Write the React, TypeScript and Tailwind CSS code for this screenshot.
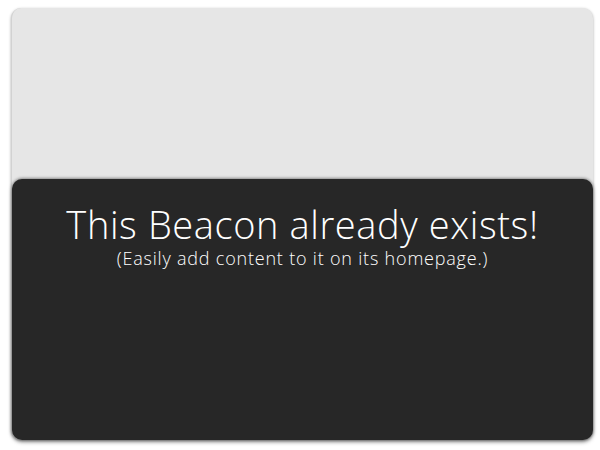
export default function App() {
  return (
    <div className="w-[600px] h-[450px] bg-white pt-[8px] pl-[11px]">
      <div className="w-[582px] h-[432px] flex flex-col rounded-[10px] bg-[#e6e6e6] shadow-[0_1px_3px_rgba(0,0,0,0.35)] border-l border-[#d2d2d2]">
        <div className="h-[171px] shrink-0" />
        <div className="flex-1 rounded-[10px] bg-[#272727] shadow-[0_-1px_3px_rgba(0,0,0,0.35),0_2px_4px_rgba(0,0,0,0.4)] flex flex-col items-center pt-[23px] text-white font-['Open_Sans',sans-serif]">
          <h1 className="text-[38px] font-light leading-[44px] tracking-[0.6px]">This Beacon already exists!</h1>
          <p className="text-[18px] font-light leading-[24px] tracking-[0.8px]">(Easily add content to it on its homepage.)</p>
        </div>
      </div>
    </div>
  )
}
